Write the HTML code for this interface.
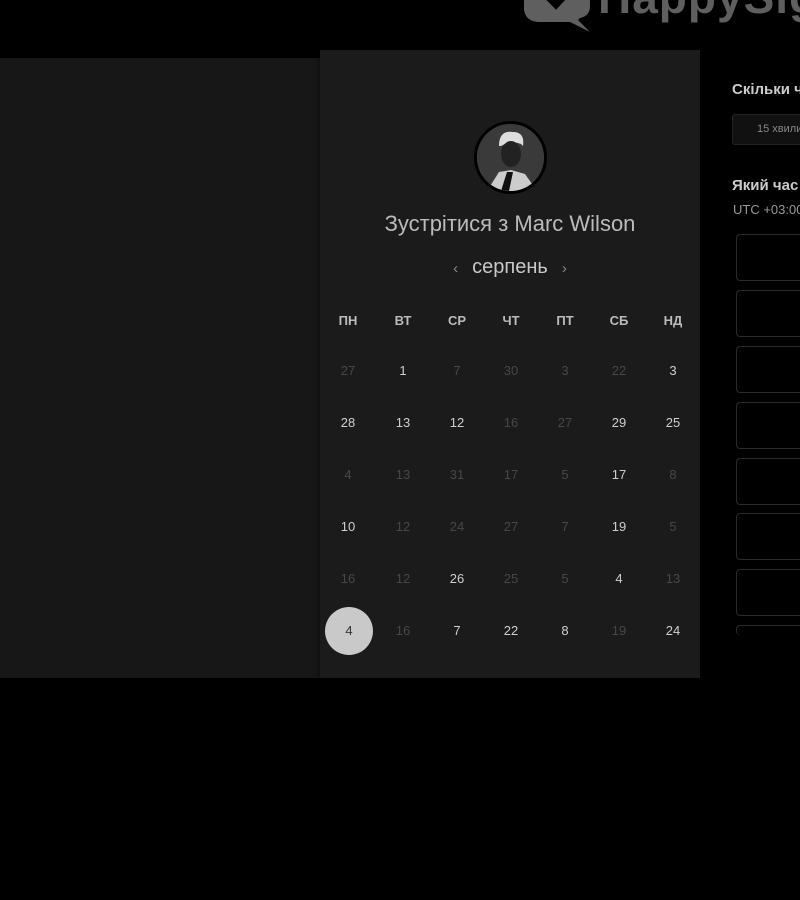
<!DOCTYPE html>
<html><head><meta charset="utf-8"><style>
*{margin:0;padding:0;box-sizing:border-box}
body{width:800px;height:900px;background:#000;position:relative;overflow:hidden;font-family:"Liberation Sans",sans-serif;color:#ccc}
.left{position:absolute;left:0;top:58px;width:320px;height:620px;background:#171717}
.card{position:absolute;left:320px;top:50px;width:380px;height:628px;background:#1b1b1b;box-shadow:0 2px 6px rgba(0,0,0,.6)}
.right{position:absolute;left:700px;top:50px;width:100px;height:628px;background:#000}
.logo{position:absolute;left:598px;top:-30px;font-size:46px;font-weight:bold;color:#5f5f5f;letter-spacing:1px;white-space:nowrap}
.av{position:absolute;left:474px;top:121px;width:73px;height:73px;border-radius:50%;background:#444;border:3px solid #000;overflow:hidden}
.title{position:absolute;left:320px;width:380px;top:211px;text-align:center;font-size:22px;color:#bbb}
.month{position:absolute;left:320px;width:380px;top:256px;text-align:center;font-size:20px;color:#c8c8c8}
.d{position:absolute;width:40px;margin-left:-20px;text-align:center;font-size:13px;color:#cfcfcf}
.dim{color:#474747}
.h{font-weight:bold;color:#bbb;font-size:13px}
.sel{position:absolute;left:325px;top:607px;width:48px;height:48px;border-radius:50%;background:#c9c9c9;color:#333;text-align:center;line-height:48px;font-size:13px}
.slot{position:absolute;left:736px;width:80px;height:47px;border:1px solid #2a2a2a;border-radius:4px}
.nw{white-space:nowrap}
</style></head><body>
<div class="left"></div>
<div class="card"></div>
<div class="right"></div>
<svg style="position:absolute;left:520px;top:-24px" width="80" height="58" viewBox="0 0 80 58"><path d="M10 0 L60 0 Q70 0 70 12 L70 30 Q70 40 60 42 L58 44 L70 56 L50 46 L20 46 Q6 46 4 34 L4 12 Q4 0 10 0Z" fill="#5f5f5f"/><path d="M22 14 L36 28 L56 6" stroke="#000" stroke-width="8" fill="none"/></svg>
<div class="logo">HappySig</div>
<div class="av"><svg width="67" height="67" viewBox="0 0 67 67"><rect width="67" height="67" fill="#3a3a3a"/><path d="M22 22 Q22 6 36 8 Q48 8 46 22 L44 20 Q34 16 24 22Z" fill="#ddd"/><ellipse cx="34" cy="30" rx="10" ry="13" fill="#222"/><path d="M10 67 L22 48 L34 46 L48 50 L60 67Z" fill="#ccc"/><path d="M30 48 L24 67 L32 67 L36 48Z" fill="#111"/></svg></div>
<div class="title">Зустрітися з Marc Wilson</div>
<div class="month"><span style="font-size:15px;color:#888;margin-right:14px">‹</span>серпень<span style="font-size:15px;color:#888;margin-left:14px">›</span></div>
<div class="nw" style="position:absolute;left:732px;top:81px;font-size:15px;font-weight:bold;color:#ccc">Скільки ч</div>
<div class="nw" style="position:absolute;left:732px;top:114px;width:80px;height:31px;background:#111;border:1px solid #222;border-radius:3px;font-size:11px;color:#888;padding:8px 0 0 24px">15 хвилин</div>
<div class="nw" style="position:absolute;left:732px;top:177px;font-size:15px;font-weight:bold;color:#ccc">Який час</div>
<div class="nw" style="position:absolute;left:733px;top:202px;font-size:13px;color:#999">UTC +03:00</div>
<div class="slot" style="top:234px"></div><div class="slot" style="top:290px"></div><div class="slot" style="top:346px"></div><div class="slot" style="top:402px"></div><div class="slot" style="top:458px"></div><div class="slot" style="top:513px"></div><div class="slot" style="top:569px"></div><div class="slot" style="top:625px;height:10px;border-bottom:none"></div>
<div class="sel">4</div>
<div id="cal"></div>
<script>
var xs=[348,403,457,511,565,619,673],ys=[371,423,475,527,579,631];
var h=["ПН","ВТ","СР","ЧТ","ПТ","СБ","НД"];
var rows=[["27*","1","7*","30*","3*","22*","3"],["28","13","12","16*","27*","29","25"],["4*","13*","31*","17*","5*","17","8*"],["10","12*","24*","27*","7*","19","5*"],["16*","12*","26","25*","5*","4","13*"],["","16*","7","22","8","19*","24"]];
var s="";
h.forEach(function(t,i){s+='<div class="d h" style="left:'+xs[i]+'px;top:313px">'+t+'</div>'});
rows.forEach(function(r,j){r.forEach(function(t,i){if(!t)return;var d=t.indexOf("*")>=0;s+='<div class="d'+(d?' dim':'')+'" style="left:'+xs[i]+'px;top:'+(ys[j]-8)+'px">'+t.replace("*","")+'</div>'})});
document.getElementById("cal").innerHTML=s;
</script>
</body></html>
